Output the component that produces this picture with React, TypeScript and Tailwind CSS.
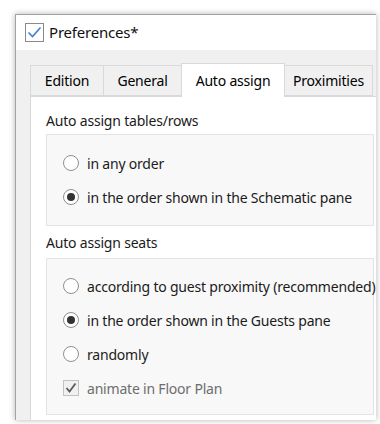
import React from "react";

const font = { fontFamily: '"Segoe UI", "Noto Sans", "Open Sans", sans-serif' };

function Radio({ checked, label }: { checked?: boolean; label: string }) {
  return (
    <div className="flex h-[34px] items-center whitespace-nowrap pl-[16px]">
      <span className="flex size-[16px] shrink-0 items-center justify-center rounded-full border border-[#8f8f8f] bg-white">
        {checked && <span className="size-[8px] rounded-full bg-[#333333]" />}
      </span>
      <span className="ml-[8px] text-[14px] tracking-[-0.2px] text-[#1b1b1b]">{label}</span>
    </div>
  );
}

function Tab({ label, width, active }: { label: string; width: string; active?: boolean }) {
  return (
    <div
      className={
        active
          ? "relative z-10 -mb-px flex h-[34px] items-center justify-center border border-b-0 border-[#d9d9d9] bg-white text-[14px] tracking-[-0.2px] " + width
          : "-ml-px flex h-[31px] items-center justify-center border border-[#d9d9d9] bg-[#f0f0f0] text-[14px] tracking-[-0.2px] first:ml-0 " + width
      }
    >
      {label}
    </div>
  );
}

export default function App() {
  return (
    <div className="relative h-[424px] w-[380px] overflow-hidden bg-white" style={font}>
      <div className="ml-[15px] mt-[14px] flex h-[406px] w-[361px] flex-col border-l border-t border-[#a3a3a3] shadow-[0_0_6px_rgba(0,0,0,0.3)]">
        {/* title bar */}
        <div className="flex h-[35px] items-center bg-white pl-[9px]">
          <svg width="19" height="19" viewBox="0 0 19 19">
            <rect x="0.5" y="0.5" width="18" height="18" fill="white" stroke="#8a8a8a" />
            <path d="M3.5 9.5 L7.5 13.5 L15.5 4.5" fill="none" stroke="#3c7fd8" strokeWidth="1.6" />
          </svg>
          <span className="ml-[5px] text-[15px] tracking-[-0.2px] text-[#111]">Preferences*</span>
        </div>

        <div className="flex flex-1 flex-col whitespace-nowrap bg-[#f0f0f0] pl-[14px] pt-[13px]">
          <div className="flex h-[33px] items-end">
            <Tab label="Edition" width="w-[74px]" />
            <Tab label="General" width="w-[79px]" />
            <Tab label="Auto assign" width="-ml-px w-[104px]" active />
            <Tab label="Proximities" width="w-[89px]" />
          </div>

          <div className="flex flex-1 flex-col border-l border-t border-[#d9d9d9] bg-white pl-[15px] pt-[14px]">
            <div className="h-[20px] text-[14px] leading-[20px] tracking-[-0.2px] text-[#1b1b1b]">Auto assign tables/rows</div>
            <div className="mt-[3px] w-[328px] border border-[#e3e3e3] bg-[#f8f8f8] py-[11px]">
              <Radio label="in any order" />
              <Radio label="in the order shown in the Schematic pane" checked />
            </div>

            <div className="mt-[7px] h-[20px] text-[14px] leading-[20px] tracking-[-0.2px] text-[#1b1b1b]">Auto assign seats</div>
            <div className="mt-[5px] w-[328px] border border-[#e3e3e3] bg-[#f8f8f8] pb-[9px] pt-[10px]">
              <Radio label="according to guest proximity (recommended)" />
              <Radio label="in the order shown in the Guests pane" checked />
              <Radio label="randomly" />
              <div className="flex h-[34px] items-center pl-[16px]">
                <svg width="16" height="16" viewBox="0 0 16 16">
                  <rect x="0.5" y="0.5" width="15" height="15" fill="#f0f0f0" stroke="#c2c2c2" />
                  <path d="M3.5 8 L6.5 11.5 L12.5 3.5" fill="none" stroke="#5a5a5a" strokeWidth="1.8" />
                </svg>
                <span className="ml-[8px] text-[14px] tracking-[-0.2px] text-[#6d6d6d]">animate in Floor Plan</span>
              </div>
            </div>
          </div>
        </div>
      </div>
    </div>
  );
}
